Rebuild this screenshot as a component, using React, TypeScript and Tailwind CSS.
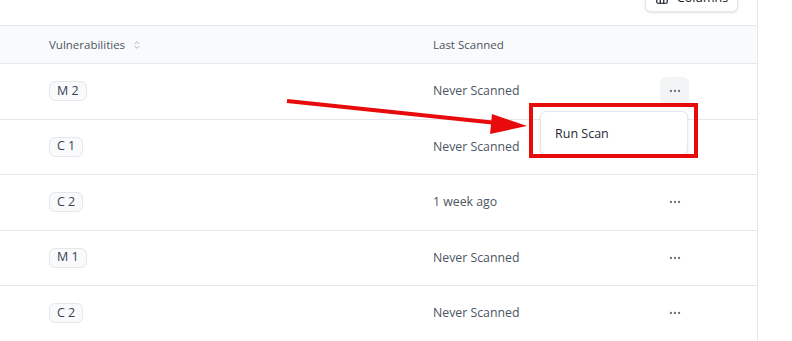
import { ChevronsUpDown, Ellipsis, Columns3 } from 'lucide-react';

interface Asset {
  vuln: string;
  lastScanned: string;
}

const assets: Asset[] = [
  { vuln: 'M 2', lastScanned: 'Never Scanned' },
  { vuln: 'C 1', lastScanned: 'Never Scanned' },
  { vuln: 'C 2', lastScanned: '1 week ago' },
  { vuln: 'M 1', lastScanned: 'Never Scanned' },
  { vuln: 'C 2', lastScanned: 'Never Scanned' },
];

export default function App() {
  return (
    <div
      className="relative h-[341px] w-[792px] overflow-hidden bg-white text-[#4b5563]"
      style={{ fontFamily: '"Open Sans", "Noto Sans", sans-serif' }}
    >
      <div className="h-full w-[758px] border-r border-[#e5e7eb]">
        {/* Toolbar */}
        <div className="flex h-[25px] justify-end pr-[19px]">
          <button className="-mt-[16px] flex h-[28px] w-[93px] items-center justify-center gap-[8px] rounded-md border border-[#e5e7eb] bg-white text-[12.5px] font-medium text-[#111827] shadow-sm">
            <Columns3 className="h-[14px] w-[14px]" />
            Columns
          </button>
        </div>

        {/* Header */}
        <div className="flex h-[39px] items-center border-y border-[#e5e7eb] bg-[#f9fafb] pl-[49px] text-[11.5px]">
          <div className="flex w-[384px] items-center gap-[7px]">
            Vulnerabilities
            <ChevronsUpDown className="h-[10px] w-[10px] text-[#9ca3af]" />
          </div>
          <div>Last Scanned</div>
        </div>

        {/* Rows */}
        {assets.map((a, i) => (
          <div key={i} className="flex h-[55.5px] items-center border-b border-[#e5e7eb] pl-[49px] text-[12.3px]">
            <div className="w-[384px]">
              <span className="inline-flex h-[20px] items-center rounded-md border border-[#e5e7eb] bg-[#f9fafb] px-[7px] text-[12.5px] text-[#374151]">
                {a.vuln}
              </span>
            </div>
            <div className="w-[227px]">{a.lastScanned}</div>
            <div className="flex w-[29px] justify-center">
              <button
                className={`flex h-[28px] w-[29px] items-center justify-center rounded-md ${
                  i === 0 ? 'bg-[#f3f4f6]' : ''
                }`}
              >
                <Ellipsis className="h-[14px] w-[14px] text-[#6b7280]" />
              </button>
            </div>
          </div>
        ))}
      </div>

      {/* Dropdown menu */}
      <div className="absolute left-[540px] top-[111px] h-[44px] w-[148px] rounded-md border border-[#e5e7eb] bg-white px-[14px] pt-[13px] text-[12.5px] text-[#1f2937] shadow-sm">
        Run Scan
      </div>

      {/* Annotation box */}
      <div className="absolute left-[529px] top-[103px] h-[55px] w-[169px] border-[4px] border-[#e80b0b]" />

      {/* Annotation arrow */}
      <svg className="absolute left-0 top-0" width="792" height="341">
        <line x1="287" y1="101" x2="497" y2="123" stroke="#e80b0b" strokeWidth="4" />
        <polygon points="527,126 492,114 490,134" fill="#e80b0b" />
      </svg>
    </div>
  );
}
